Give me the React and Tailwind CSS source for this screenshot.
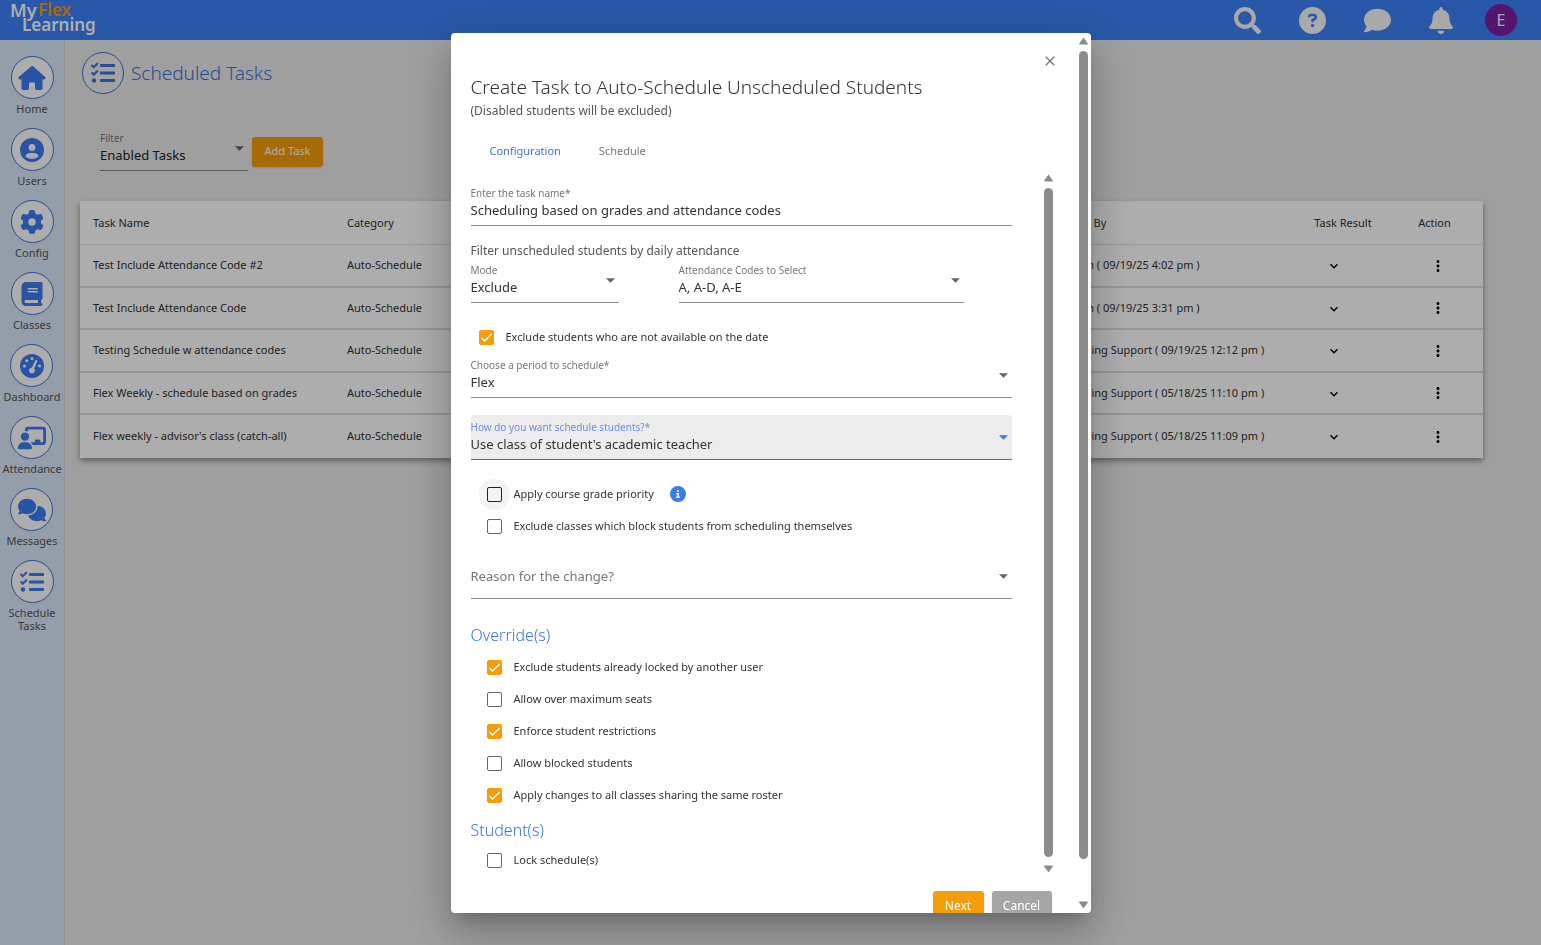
import React, { useState } from "react";
import { FaSearch, FaTasks } from "react-icons/fa";
import {
  FaBell,
  FaBook,
  FaChalkboardUser,
  FaCircleInfo,
  FaCircleQuestion,
  FaCircleUser,
  FaComment,
  FaComments,
  FaGaugeHigh,
  FaGear,
  FaHouse,
} from "react-icons/fa6";
import { MdCheck, MdClose, MdExpandMore, MdMoreVert } from "react-icons/md";

const navItems = [
  { label: "Home", icon: FaHouse },
  { label: "Users", icon: FaCircleUser },
  { label: "Config", icon: FaGear },
  { label: "Classes", icon: FaBook },
  { label: "Dashboard", icon: FaGaugeHigh },
  { label: "Attendance", icon: FaChalkboardUser },
  { label: "Messages", icon: FaComments },
  { label: "Schedule Tasks", icon: FaTasks },
];

const tasks = [
  { name: "Test Include Attendance Code #2", by: "Erin Eastman ( 09/19/25 4:02 pm )" },
  { name: "Test Include Attendance Code", by: "Erin Eastman ( 09/19/25 3:31 pm )" },
  { name: "Testing Schedule w attendance codes", by: "MyFlexLearning Support ( 09/19/25 12:12 pm )" },
  { name: "Flex Weekly - schedule based on grades", by: "MyFlexLearning Support ( 05/18/25 11:10 pm )" },
  { name: "Flex weekly - advisor's class (catch-all)", by: "MyFlexLearning Support ( 05/18/25 11:09 pm )" },
];

const overrideOptions = [
  { id: "locked", label: "Exclude students already locked by another user", checked: true },
  { id: "seats", label: "Allow over maximum seats", checked: false },
  { id: "restrictions", label: "Enforce student restrictions", checked: true },
  { id: "blocked", label: "Allow blocked students", checked: false },
  { id: "roster", label: "Apply changes to all classes sharing the same roster", checked: true },
];

const Logo = () => (
  <svg width="92" height="40" viewBox="0 0 92 40" role="img" aria-label="MyFlexLearning" className="overflow-visible font-semibold">
    <text x="0" y="17" fontSize="18" fill="#fff">My</text>
    <text x="28" y="16" fontSize="17" fill="#f59e0b">Flex</text>
    <text x="12" y="31" fontSize="17" fill="#fff">Learning</text>
  </svg>
);

const Arrow = ({ className }) => (
  <svg viewBox="0 0 10 5" className={`pointer-events-none absolute right-1 bottom-5 h-[5px] w-[9px] ${className}`}>
    <path d="M0 0h10L5 5z" fill="currentColor" />
  </svg>
);

const SelectField = ({ id, label, value, active, className = "" }) => (
  <div className={`relative ${active ? "rounded-t-sm bg-[#ececec] pt-1.5" : ""} ${className}`}>
    <label
      htmlFor={id}
      className={`block text-[10px] leading-3 ${active ? "text-[#6d8fe0]" : "text-[#777]"}`}>
      {label}
    </label>
    <select
      id={id}
      defaultValue={value}
      className={`block h-[27px] w-full appearance-none border-b pb-0.5 text-[13px] outline-none ${
        active ? "border-[#3b72d9]" : "border-[#8a8a8a]"
      }`}>
      <option>{value}</option>
    </select>
    <Arrow className={active ? "text-[#3b72d9]" : "text-[#666]"} />
  </div>
);

const Checkbox = ({ id, label, defaultChecked = false, focused = false }) => {
  const [checked, setChecked] = useState(defaultChecked);

  return (
    <div className="flex h-4 items-center gap-3">
      <span className="relative flex h-[15px] w-[15px] items-center justify-center">
        {focused && <span className="absolute -inset-2 rounded-full bg-[#f3f3f3]" />}
        <input
          id={id}
          type="checkbox"
          checked={checked}
          onChange={(e) => setChecked(e.target.checked)}
          className={`relative h-[15px] w-[15px] appearance-none rounded-[2px] border checked:border-[#f59e0b] checked:bg-[#f59e0b] ${
            focused ? "border-[#222]" : "border-[#666]"
          }`}
        />
        {checked && <MdCheck className="pointer-events-none absolute h-[15px] w-[15px] text-white" />}
      </span>
      <label htmlFor={id} className="text-[11px] leading-4">{label}</label>
    </div>
  );
};

const Scrollbar = ({ thumb, className }) => (
  <div aria-hidden="true" className={`flex w-[15px] shrink-0 flex-col items-center text-[#8b8b8b] ${className}`}>
    <svg viewBox="0 0 9 8" className="h-2 w-[9px] shrink-0">
      <path d="M4.5 .5 8.8 6.6q.2.9-.6.9H.8q-.8 0-.6-.9z" fill="currentColor" />
    </svg>
    <div className={`mt-1.5 w-[9px] rounded-full bg-[#8b8b8b] ${thumb}`} />
    <svg viewBox="0 0 9 8" className="mt-auto h-2 w-[9px] shrink-0">
      <path d="M4.5 7.5.2 1.4Q0 .5.8.5h7.4q.8 0 .6.9z" fill="currentColor" />
    </svg>
  </div>
);

const Header = () => (
  <header className="flex h-10 items-center bg-[#3b82f6] pr-6 pl-2.5 text-[#fafafa]">
    <Logo />
    <div className="ml-auto flex items-center gap-[38px] text-[27px]">
      <button aria-label="Search"><FaSearch /></button>
      <button aria-label="Help"><FaCircleQuestion /></button>
      <button aria-label="Chat"><FaComment /></button>
      <button aria-label="Notifications"><FaBell className="w-6" /></button>
    </div>
    <button className="ml-8 h-8 w-8 rounded-full bg-[#7b1fa2] text-base">E</button>
  </header>
);

const Sidebar = () => (
  <nav className="flex w-[65px] shrink-0 flex-col items-center gap-[13px] border-r border-[#d3dceb] bg-[#dbe8fb] pt-4">
    {navItems.map(({ label, icon: Icon }) => (
      <a key={label} href="#" className="flex flex-col items-center gap-[3px] text-center text-[11px] leading-[13px] text-[#555]">
        <span className="flex h-[43px] w-[43px] items-center justify-center rounded-full border border-[#3b72d9] bg-white text-[#3b7df0]">
          <Icon className="h-6 w-7" />
        </span>
        {label}
      </a>
    ))}
  </nav>
);

const TaskTable = () => (
  <table className="mt-[30px] w-full table-fixed border-separate border-spacing-0 bg-white text-left text-[11px] text-[#333] shadow-[0_3px_6px_rgba(0,0,0,0.4)]">
    <colgroup>
      <col className="w-[254px]" />
      <col className="w-[254px]" />
      <col />
      <col className="w-[322px]" />
      <col className="w-[86px]" />
      <col className="w-[97px]" />
    </colgroup>
    <thead>
      <tr className="h-11 [&>th]:border-b [&>th]:border-[#e0e0e0] [&>th]:pt-0.5 [&>th]:font-normal">
        <th className="px-[13px]">Task Name</th>
        <th className="px-[13px]">Category</th>
        <th className="px-[13px]">Schedule</th>
        <th className="pl-11">Last Updated By</th>
        <th className="text-center">Task Result</th>
        <th className="text-center">Action</th>
      </tr>
    </thead>
    <tbody>
      {tasks.map((task) => (
        <tr
          key={task.name}
          className="odd:h-[43px] even:h-[42px] [&>td]:border-b-2 [&>td]:border-[#dedede] last:[&>td]:border-b-0">
          <td className="px-[13px]">{task.name}</td>
          <td className="px-[13px]">Auto-Schedule</td>
          <td className="px-[13px]">Daily</td>
          <td className="pl-12 whitespace-nowrap">{task.by}</td>
          <td className="pr-[18px] text-center">
            <button aria-label="Show result" className="align-middle text-base text-black">
              <MdExpandMore stroke="currentColor" />
            </button>
          </td>
          <td className="pl-1.5 text-center">
            <button aria-label="Actions" className="align-middle text-lg text-black"><MdMoreVert /></button>
          </td>
        </tr>
      ))}
    </tbody>
  </table>
);

const TaskDialog = () => (
  <div className="fixed inset-0 flex justify-center bg-black/32 pt-[33px] pb-8">
    <div
      role="dialog"
      aria-labelledby="dialog-title"
      className="flex w-full max-w-[640px] overflow-hidden rounded-sm bg-white text-[#333] shadow-[0_11px_15px_-7px_rgba(0,0,0,0.2),0_24px_38px_3px_rgba(0,0,0,0.14),0_9px_46px_8px_rgba(0,0,0,0.12)]">
      <div className="flex min-w-0 flex-1 flex-col px-5 pt-5">
        <div className="flex justify-end">
          <button aria-label="Close" className="-mr-0.5 text-base text-[#777]"><MdClose stroke="currentColor" /></button>
        </div>
        <h2 id="dialog-title" className="mt-1.5 text-[19px] leading-6 font-light text-[#333]">
          Create Task to Auto-Schedule Unscheduled Students
        </h2>
        <p className="mt-1 text-[12px] leading-4 text-[#555]">(Disabled students will be excluded)</p>

        <div role="tablist" className="mt-6 flex gap-[38px] pl-[19px] text-[11px] leading-4">
          <button role="tab" aria-selected="true" className="text-[#3b72d9]">Configuration</button>
          <button role="tab" aria-selected="false" className="text-[#777]">Schedule</button>
        </div>

        <div className="mt-3 flex h-[705px] shrink-0">
          <form className="min-w-0 flex-1 pt-4 pr-[29px]">
            <label htmlFor="task-name" className="block text-[10px] leading-3 text-[#777]">Enter the task name*</label>
            <input
              id="task-name"
              type="text"
              defaultValue="Scheduling based on grades and attendance codes"
              className="block h-[27px] w-full border-b border-[#8a8a8a] pb-1 text-[13px] outline-none"
            />

            <p className="mt-[17px] text-[12px] leading-4 text-[#555]">Filter unscheduled students by daily attendance</p>
            <div className="mt-[5px] flex gap-[60px]">
              <SelectField id="mode" label="Mode" value="Exclude" className="w-[148px]" />
              <SelectField id="codes" label="Attendance Codes to Select" value="A, A-D, A-E" className="w-[285px]" />
            </div>
            <div className="mt-[26px] pl-2">
              <Checkbox id="unavailable" label="Exclude students who are not available on the date" defaultChecked />
            </div>
            <SelectField id="period" label="Choose a period to schedule*" value="Flex" className="mt-3.5" />
            <SelectField
              id="method"
              label="How do you want schedule students?*"
              value="Use class of student's academic teacher"
              active
              className="mt-[17px]"
            />

            <div className="mt-[26px] flex flex-col gap-4 pl-4">
              <div className="flex items-center gap-4">
                <Checkbox id="priority" label="Apply course grade priority" focused />
                <FaCircleInfo className="h-4 w-4 text-[#3b7df0]" />
              </div>
              <Checkbox id="blocking" label="Exclude classes which block students from scheduling themselves" />
            </div>

            <div className="relative mt-[26px]">
              <select
                aria-label="Reason for the change?"
                className="block h-[39px] w-full appearance-none border-b border-[#8a8a8a] pb-1 text-[13px] text-[#777] outline-none">
                <option>Reason for the change?</option>
              </select>
              <Arrow className="text-[#666]" />
            </div>

            <h3 className="mt-[26px] text-[16px] leading-5 font-light text-[#3b72d9]">Override(s)</h3>
            <div className="mt-3.5 flex flex-col gap-4 pl-4">
              {overrideOptions.map((option) => (
                <Checkbox key={option.id} id={option.id} label={option.label} defaultChecked={option.checked} />
              ))}
            </div>

            <h3 className="mt-[17px] text-[16px] leading-5 font-light text-[#3b72d9]">Student(s)</h3>
            <div className="mt-3 pl-4">
              <Checkbox id="lock" label="Lock schedule(s)" />
            </div>
          </form>
          <Scrollbar thumb="h-[669px]" className="py-[3px]" />
        </div>

        <div className="mt-[15px] flex shrink-0 justify-end gap-2 pr-1 text-[12px] text-white">
          <button className="h-[30px] w-[51px] rounded-[3px] bg-[#f59e0b] shadow">Next</button>
          <button className="h-[30px] w-[60px] rounded-[3px] bg-[#a6a6a6] shadow">Cancel</button>
        </div>
      </div>
      <Scrollbar thumb="h-[808px]" className="py-1" />
    </div>
  </div>
);

const App = () => {
  return (
    <div className="flex min-h-screen flex-col bg-[#ebebeb] font-['Noto_Sans',sans-serif] text-[#222]">
      <Header />
      <div className="flex flex-1">
        <Sidebar />
        <main className="min-w-0 flex-1 pt-3 pr-[58px] pl-[15px]">
          <div className="flex items-center gap-[7px] pl-0.5">
            <span className="flex h-[42px] w-[42px] items-center justify-center rounded-full border border-[#3b72d9] bg-white/20 text-[#3b72d9]">
              <FaTasks className="h-6 w-6" />
            </span>
            <h1 className="text-[19px] font-light text-[#3b72d9]">Scheduled Tasks</h1>
          </div>
          <div className="mt-[38px] flex items-center gap-1 pl-5">
            <SelectField id="filter" label="Filter" value="Enabled Tasks" className="w-[148px]" />
            <button className="h-[30px] w-[71px] rounded-[3px] bg-[#f59e0b] text-[11px] text-white shadow">Add Task</button>
          </div>
          <TaskTable />
        </main>
      </div>
      <TaskDialog />
    </div>
  );
};

export default App;
